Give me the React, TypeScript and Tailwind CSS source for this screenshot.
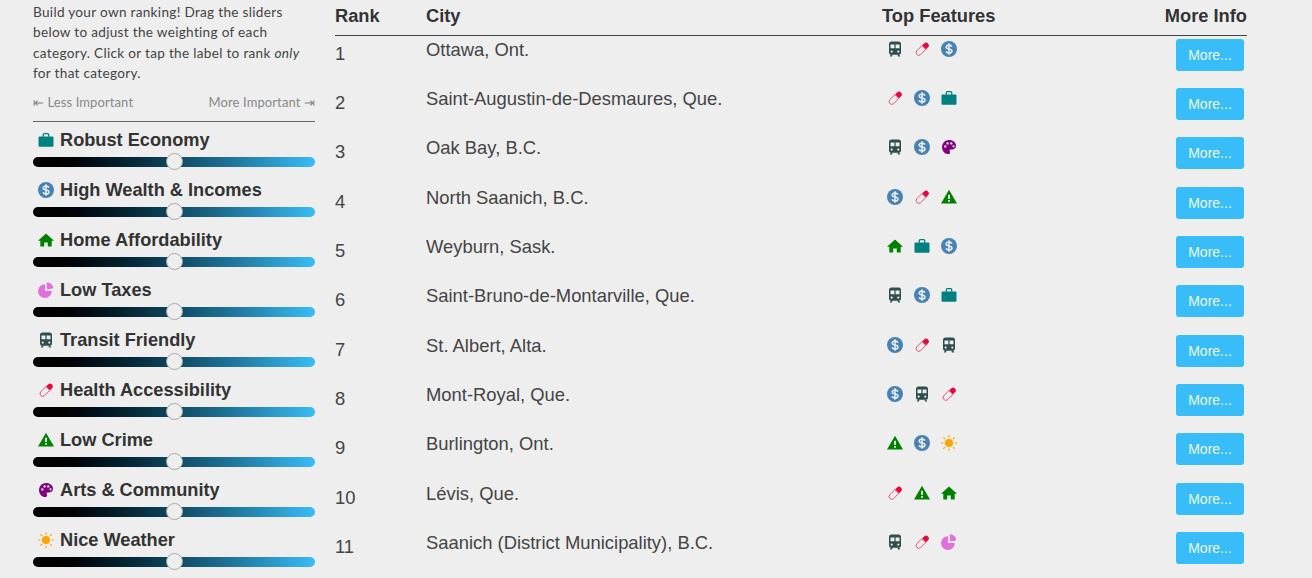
import React from 'react';

type IconName = 'briefcase' | 'dollar' | 'home' | 'pie' | 'train' | 'pill' | 'warning' | 'palette' | 'sun';

const Icon: React.FC<{ name: IconName; className?: string }> = ({ name, className = 'w-4 h-4' }) => {
    const svg = { viewBox: '0 0 16 16', className };
    switch (name) {
        case 'briefcase':
            return (
                <svg {...svg}>
                    <path fill="#008080" d="M1.500 4.500h13a1 1 0 0 1 1 1v8.200a1 1 0 0 1-1 1h-13a1 1 0 0 1-1-1V5.500a1 1 0 0 1 1-1z" />
                    <path fill="none" stroke="#008080" strokeWidth="1.300" d="M5.300 4.800V2.600a.9.9 0 0 1 .9-.9h3.600a.9.9 0 0 1 .9.9v2.200" />
                </svg>
            );
        case 'dollar':
            return (
                <svg {...svg}>
                    <circle cx="8" cy="8" r="8" fill="#4682b4" />
                    <path fill="none" stroke="#eeeeee" strokeWidth="1.600" d="M10.900 5.700C10.400 4.600 9.300 4.100 8 4.100c-1.600 0-2.800.8-2.800 2 0 2.900 5.700 1 5.700 3.800 0 1.300-1.300 2-2.900 2-1.400 0-2.500-.5-3-1.600" />
                    <path stroke="#eeeeee" strokeWidth="1.500" d="M8 2.300v11.400" />
                </svg>
            );
        case 'home':
            return (
                <svg {...svg}>
                    <path fill="#008000" d="M8 1.500 16 8.800h-2.300v5.700H9.800v-4H6.200v4H2.300V8.800H0z" />
                </svg>
            );
        case 'pie':
            return (
                <svg {...svg}>
                    <path fill="#e070db" d="M7 2.200V9h6.800A6.900 6.900 0 1 1 7 2.200z" />
                    <path fill="#e070db" d="M8.800.2a7 7 0 0 1 6.600 6l-6.600 1.300z" />
                </svg>
            );
        case 'train':
            return (
                <svg {...svg}>
                    <path fill="#2f4f4f" fillRule="evenodd" d="M4.500.6h7a2.500 2.500 0 0 1 2.500 2.500v8.600a2 2 0 0 1-2 2H4a2 2 0 0 1-2-2V3.100A2.500 2.500 0 0 1 4.500.6zM3.500 3.400v3.800h3.900V3.400zm5.100 0v3.800h3.900V3.400zM4.700 9.500a1.100 1.100 0 1 0 0 2.200 1.100 1.100 0 0 0 0-2.200zm6.600 0a1.100 1.100 0 1 0 0 2.200 1.100 1.100 0 0 0 0-2.200z" />
                    <path fill="#2f4f4f" d="M3.800 13.500h2l-1 2h-2zM10.200 13.500h2l1 2h-2z" />
                </svg>
            );
        case 'pill':
            return (
                <svg {...svg}>
                    <path fill="#e8063c" d="M8 4.500 10.100 2.500a2.700 2.700 0 0 1 3.900 3.800L11.900 8.400z" />
                    <path fill="none" stroke="#ee4d72" strokeWidth="1" d="M8 4.500 2.700 9.900a2.700 2.700 0 0 0 3.800 3.800L11.900 8.400z" />
                </svg>
            );
        case 'warning':
            return (
                <svg {...svg}>
                    <path fill="#008000" fillRule="evenodd" d="M8 .8 16 14.600H0zM7.100 5.800v4.300h1.800V5.800zm0 5.200v1.800h1.800V11z" />
                </svg>
            );
        case 'palette':
            return (
                <svg {...svg}>
                    <path fill="#800080" fillRule="evenodd" d="M8.200 1C12.200 1 15 3.500 15 6.700c0 2.600-2 3.800-4 3.800H9.600c-1 0-1.300 1-.8 1.700.6.900.4 2.800-1.100 2.800C4 15.200 1 12 1 8.200 1 4.200 4 1 8.200 1zM4.300 6.200a1.200 1.200 0 1 0 0 2.400 1.200 1.200 0 0 0 0-2.400zm2.300-3a1.200 1.200 0 1 0 0 2.400 1.200 1.200 0 0 0 0-2.400zm3.700 0a1.200 1.200 0 1 0 0 2.400 1.200 1.200 0 0 0 0-2.400zm2.200 3a1.100 1.100 0 1 0 0 2.200 1.100 1.100 0 0 0 0-2.200z" />
                </svg>
            );
        case 'sun':
            return (
                <svg {...svg}>
                    <circle cx="8" cy="8" r="4.100" fill="#ffa500" />
                    <path stroke="#ffa500" strokeWidth="1.200" strokeLinecap="round" d="M8 .5v1.500M8 14v1.500M.5 8H2M14 8h1.500M2.700 2.700l1 1M12.300 12.300l1 1M2.700 13.300l1-1M12.300 3.700l1-1" />
                </svg>
            );
    }
};

const categories: { label: string; icon: IconName }[] = [
    { label: 'Robust Economy', icon: 'briefcase' },
    { label: 'High Wealth & Incomes', icon: 'dollar' },
    { label: 'Home Affordability', icon: 'home' },
    { label: 'Low Taxes', icon: 'pie' },
    { label: 'Transit Friendly', icon: 'train' },
    { label: 'Health Accessibility', icon: 'pill' },
    { label: 'Low Crime', icon: 'warning' },
    { label: 'Arts & Community', icon: 'palette' },
    { label: 'Nice Weather', icon: 'sun' },
];

const cities: { rank: number; city: string; features: IconName[] }[] = [
    { rank: 1, city: 'Ottawa, Ont.', features: ['train', 'pill', 'dollar'] },
    { rank: 2, city: 'Saint-Augustin-de-Desmaures, Que.', features: ['pill', 'dollar', 'briefcase'] },
    { rank: 3, city: 'Oak Bay, B.C.', features: ['train', 'dollar', 'palette'] },
    { rank: 4, city: 'North Saanich, B.C.', features: ['dollar', 'pill', 'warning'] },
    { rank: 5, city: 'Weyburn, Sask.', features: ['home', 'briefcase', 'dollar'] },
    { rank: 6, city: 'Saint-Bruno-de-Montarville, Que.', features: ['train', 'dollar', 'briefcase'] },
    { rank: 7, city: 'St. Albert, Alta.', features: ['dollar', 'pill', 'train'] },
    { rank: 8, city: 'Mont-Royal, Que.', features: ['dollar', 'train', 'pill'] },
    { rank: 9, city: 'Burlington, Ont.', features: ['warning', 'dollar', 'sun'] },
    { rank: 10, city: 'Lévis, Que.', features: ['pill', 'warning', 'home'] },
    { rank: 11, city: 'Saanich (District Municipality), B.C.', features: ['train', 'pill', 'pie'] },
];

const Slider: React.FC = () => (
    <div className="relative h-[10px] rounded-[5px] bg-gradient-to-r from-black to-[#38bdf8]">
        <div className="absolute left-[132.5px] top-[-4px] w-[17px] h-[17px] rounded-full bg-[#eeeeee] border border-[#a8a8a8]"></div>
    </div>
);

export default function App() {
    return (
        <div className="flex w-[1312px] h-[578px] overflow-hidden bg-[#eeeeee] font-['Liberation_Sans',sans-serif] text-[#333]">
            <aside className="w-[282px] ml-[33px] shrink-0">
                <p className="font-['Lato',sans-serif] text-[13.6px] tracking-[0.3px] leading-[20.4px] pt-[2px] text-[#444] whitespace-nowrap">
                    Build your own ranking! Drag the sliders
                    <br />
                    below to adjust the weighting of each
                    <br />
                    category. Click or tap the label to rank <em>only</em>
                    <br />
                    for that category.
                </p>
                <div className="flex justify-between mt-[9px] h-[20px] items-center font-['Lato',sans-serif] text-[13px] tracking-[0.1px] text-[#888]">
                    <span>⇤ Less Important</span>
                    <span>More Important ⇥</span>
                </div>
                <div className="mt-[8px] border-t border-[#666]"></div>
                {categories.map((cat) => (
                    <div key={cat.label} className="h-[50px] pt-[8px]">
                        <div className="flex items-center h-[22px] pl-[5px]">
                            <span className="w-[16px] flex justify-center shrink-0 -mt-[2px]">
                                <Icon name={cat.icon} />
                            </span>
                            <span className="ml-[6px] text-[18.2px] font-bold text-[#333] whitespace-nowrap">{cat.label}</span>
                        </div>
                        <div className="mt-[5px]">
                            <Slider />
                        </div>
                    </div>
                ))}
            </aside>
            <main className="w-[912px] ml-[20px] shrink-0">
                <div className="flex h-[35.7px] pb-[4px] items-center border-b border-[#444] text-[18.3px] font-bold text-[#333]">
                    <div className="w-[91px]">Rank</div>
                    <div className="w-[456px]">City</div>
                    <div className="flex-1">Top Features</div>
                    <div>More Info</div>
                </div>
                {cities.map((row) => (
                    <div key={row.rank} className="flex h-[49.35px] text-[18.4px] text-[#444]">
                        <div className="w-[91px] pt-[7px] leading-[22px]">{row.rank}</div>
                        <div className="w-[456px] pt-[3px] leading-[22px]">{row.city}</div>
                        <div className="flex-1 flex gap-[11px] pl-[5px] pt-[5px] h-[24px]">
                            {row.features.map((f) => (
                                <Icon key={f} name={f} />
                            ))}
                        </div>
                        <div className="pr-[3px] pt-[3px]">
                            <button className="w-[68px] h-[32px] pt-[1px] rounded-[3px] bg-[#38bdf8] text-[14px] text-[#eef9ff]">More...</button>
                        </div>
                    </div>
                ))}
            </main>
        </div>
    );
}
